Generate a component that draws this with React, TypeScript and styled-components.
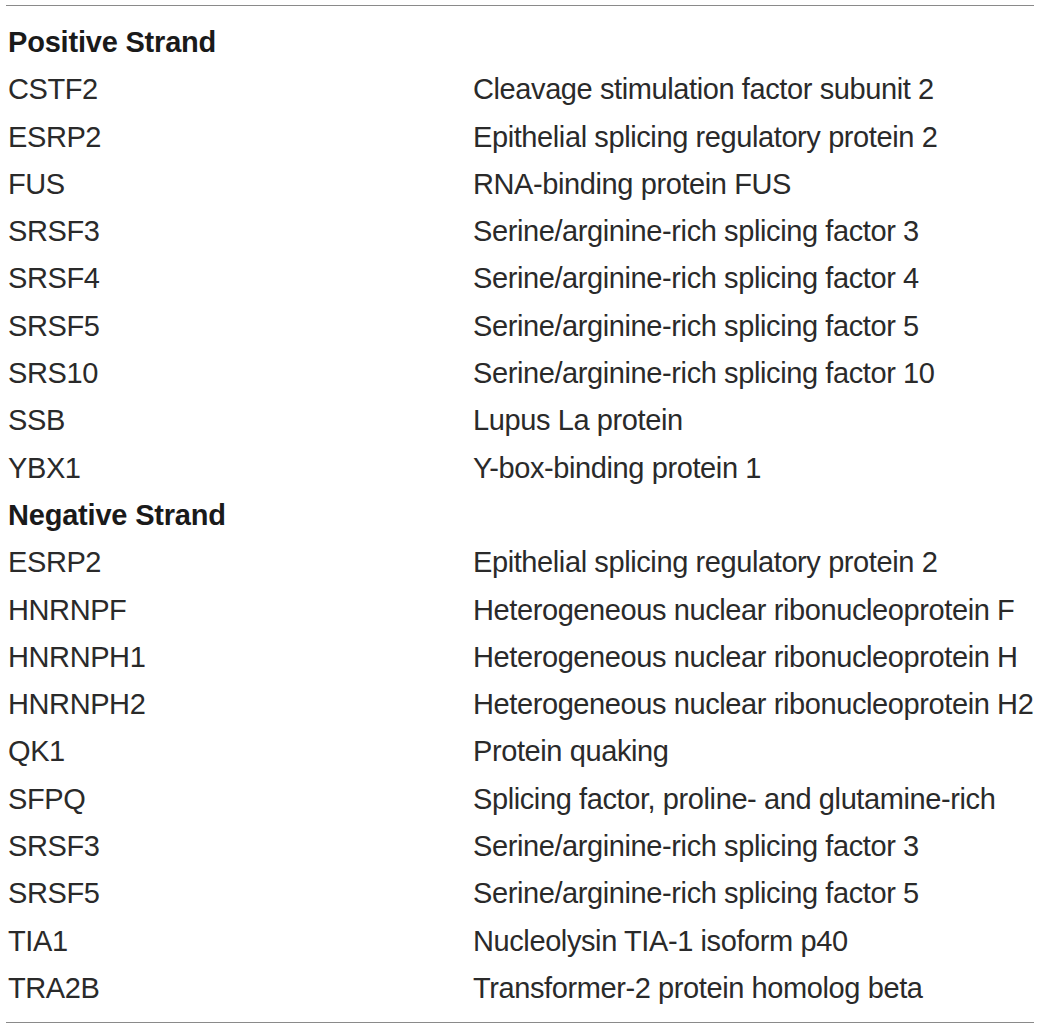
import React from "react";
import styled, { createGlobalStyle } from "styled-components";

const Global = createGlobalStyle`
  html, body { margin: 0; padding: 0; background: #ffffff; }
  body { font-family: "Liberation Sans", Arial, sans-serif; color: #2a2a2a; }
`;

const Page = styled.div`
  padding: 5px 6px 0 6px;
`;

const Table = styled.table`
  width: 1028px;
  table-layout: fixed;
  border-collapse: collapse;
  border-top: 1.5px solid #8a8a8a;
  border-bottom: 1.5px solid #8a8a8a;
`;

const Col = styled.col<{ $w?: number }>`
  width: ${(p) => (p.$w ? `${p.$w}px` : "auto")};
`;

const Spacer = styled.tr<{ $h: number }>`
  height: ${(p) => p.$h}px;
  td { padding: 0; }
`;

const Row = styled.tr`
  height: 47.29px;
`;

const Cell = styled.td<{ $first?: boolean }>`
  padding: 0 0 0 ${(p) => (p.$first ? "2px" : "0")};
  font-size: 29px;
  line-height: 47.29px;
  font-weight: 400;
  letter-spacing: -0.4px;
  white-space: nowrap;
  overflow: visible;
  vertical-align: middle;
`;

const GroupCell = styled.td`
  padding: 0 0 0 2px;
  font-size: 29px;
  line-height: 47.29px;
  font-weight: 700;
  letter-spacing: -0.2px;
  color: #1a1a1a;
`;

type Group = { title: string; rows: [string, string][] };

const groups: Group[] = [
  {
    title: "Positive Strand",
    rows: [
      ["CSTF2", "Cleavage stimulation factor subunit 2"],
      ["ESRP2", "Epithelial splicing regulatory protein 2"],
      ["FUS", "RNA-binding protein FUS"],
      ["SRSF3", "Serine/arginine-rich splicing factor 3"],
      ["SRSF4", "Serine/arginine-rich splicing factor 4"],
      ["SRSF5", "Serine/arginine-rich splicing factor 5"],
      ["SRS10", "Serine/arginine-rich splicing factor 10"],
      ["SSB", "Lupus La protein"],
      ["YBX1", "Y-box-binding protein 1"],
    ],
  },
  {
    title: "Negative Strand",
    rows: [
      ["ESRP2", "Epithelial splicing regulatory protein 2"],
      ["HNRNPF", "Heterogeneous nuclear ribonucleoprotein F"],
      ["HNRNPH1", "Heterogeneous nuclear ribonucleoprotein H"],
      ["HNRNPH2", "Heterogeneous nuclear ribonucleoprotein H2"],
      ["QK1", "Protein quaking"],
      ["SFPQ", "Splicing factor, proline- and glutamine-rich"],
      ["SRSF3", "Serine/arginine-rich splicing factor 3"],
      ["SRSF5", "Serine/arginine-rich splicing factor 5"],
      ["TIA1", "Nucleolysin TIA-1 isoform p40"],
      ["TRA2B", "Transformer-2 protein homolog beta"],
    ],
  },
];

export default function App() {
  return (
    <Page>
      <Global />
      <Table>
        <colgroup>
          <Col $w={467} />
          <Col />
        </colgroup>
        <tbody>
          <Spacer $h={13.5}><td colSpan={2} /></Spacer>
          {groups.map((g) => (
            <React.Fragment key={g.title}>
              <Row>
                <GroupCell colSpan={2}>{g.title}</GroupCell>
              </Row>
              {g.rows.map(([gene, name], i) => (
                <Row key={g.title + i}>
                  <Cell $first>{gene}</Cell>
                  <Cell>{name}</Cell>
                </Row>
              ))}
            </React.Fragment>
          ))}
          <Spacer $h={10}><td colSpan={2} /></Spacer>
        </tbody>
      </Table>
    </Page>
  );
}
